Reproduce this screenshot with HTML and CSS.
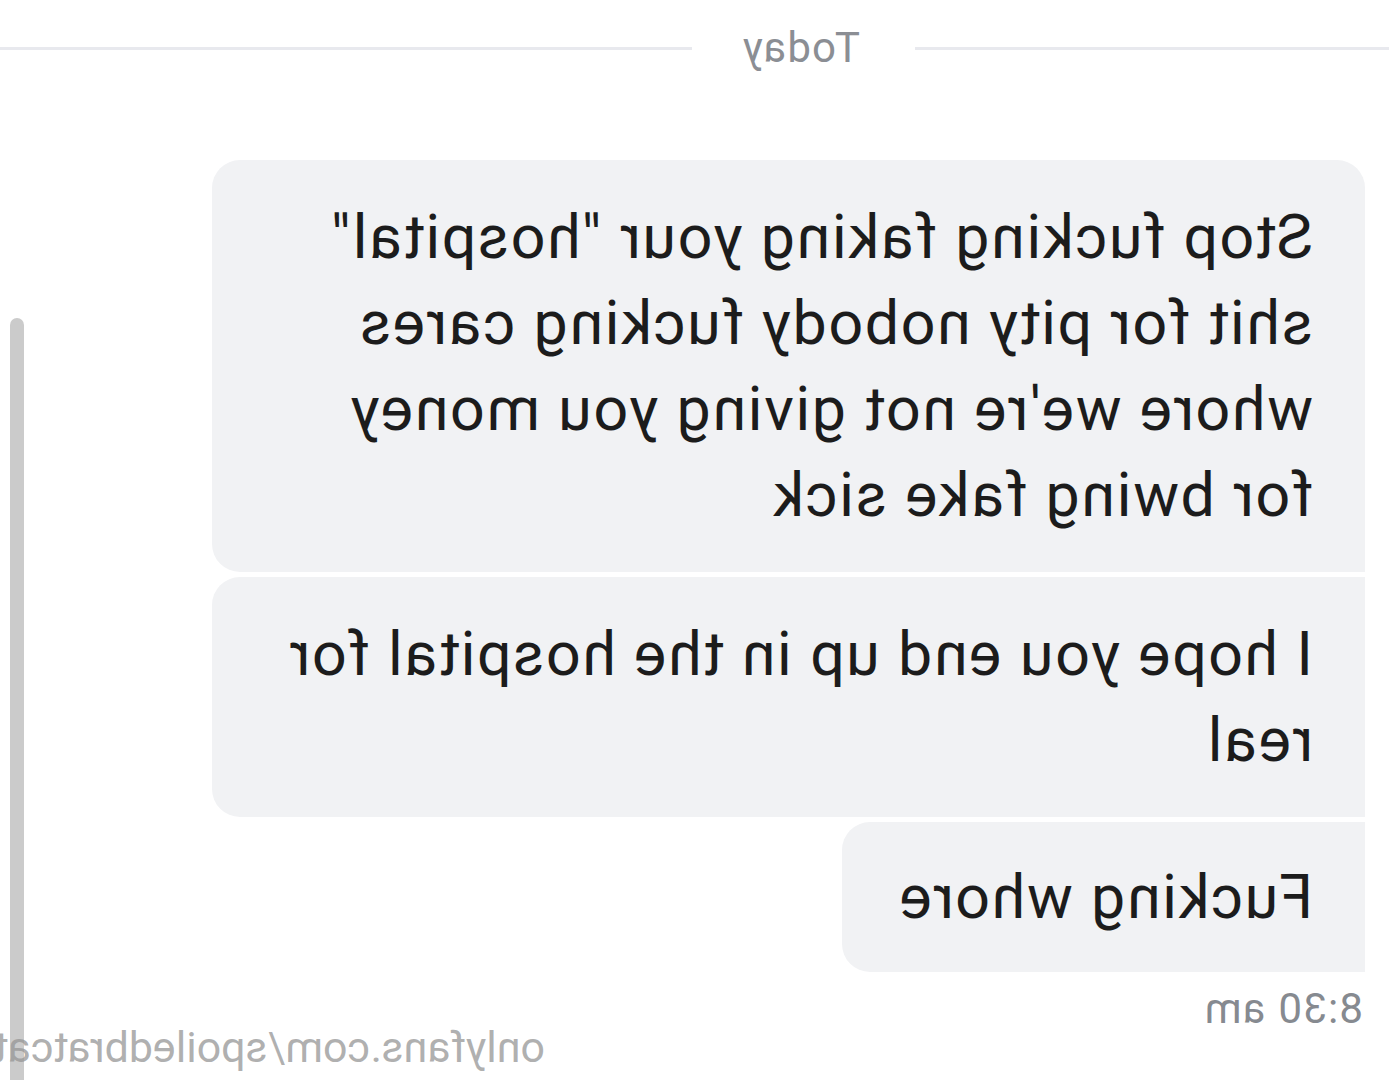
FILE: index.html
```html
<!DOCTYPE html>
<html lang="en">
<head>
    <meta charset="UTF-8">
    <meta name="viewport" content="width=device-width, initial-scale=1.0">
    <title>Chat</title>
    <link rel="stylesheet" href="styles.css">
</head>
<body>
    <!-- the screenshot is mirrored, so the whole page is flipped -->
    <div class="page">
        <div class="divider">
            <span class="divider-line short"></span>
            <span class="divider-text">Today</span>
            <span class="divider-line"></span>
        </div>

        <div class="messages">
            <div class="bubble first">Stop fucking faking your "hospital" shit for pity nobody fucking cares whore we're not giving you money for bwing fake sick</div>
            <div class="bubble">I hope you end up in the hospital for real</div>
            <div class="bubble last">Fucking whore</div>
            <div class="time">8:30 am</div>
        </div>

        <div class="scrollbar"></div>
        <div class="watermark">onlyfans.com/spoiledbratcat</div>
    </div>
</body>
</html>
```

FILE: styles.css
```css
body {
    margin: 0;
    padding: 0;
    background: #fff;
    font-family: Roboto, "Liberation Sans", Arial, sans-serif;
}

.page {
    position: relative;
    width: 1389px;
    height: 1080px;
    overflow: hidden;
    background: #fff;
    transform: scaleX(-1);
}

.divider {
    display: flex;
    align-items: center;
    padding-top: 18px;
    height: 60px;
}

.divider-line {
    flex: 1;
    height: 3px;
    background: #e8e9ee;
}

.divider-line.short {
    flex: none;
    width: 474px;
}

.divider-text {
    padding: 0 50px 0 55px;
    font-size: 42px;
    letter-spacing: 1px;
    line-height: 60px;
    color: #8b8e94;
}

.messages {
    display: flex;
    flex-direction: column;
    align-items: flex-start;
    padding: 82px 0 0 24px;
}

.bubble {
    max-width: 1153px;
    box-sizing: border-box;
    padding: 34px 52px;
    margin-bottom: 5px;
    background: #f1f2f4;
    color: #1c1c1c;
    font-size: 61px;
    letter-spacing: 1.6px;
    line-height: 86px;
    border-radius: 0 28px 28px 0;
}

.bubble.first {
    border-radius: 28px 28px 28px 0;
}

.bubble.last {
    padding: 32px 56px 32px 52px;
}

.time {
    margin-top: 8px;
    padding-left: 2px;
    font-size: 42px;
    letter-spacing: 1.2px;
    line-height: 48px;
    color: #868a90;
}

.scrollbar {
    position: absolute;
    left: 1365px;
    top: 318px;
    width: 14px;
    height: 800px;
    border-radius: 7px;
    background: #cbcbcb;
}

.watermark {
    position: absolute;
    left: 844px;
    top: 1022px;
    white-space: nowrap;
    font-size: 43px;
    line-height: 50px;
    color: rgba(150, 150, 150, 0.75);
}
```
